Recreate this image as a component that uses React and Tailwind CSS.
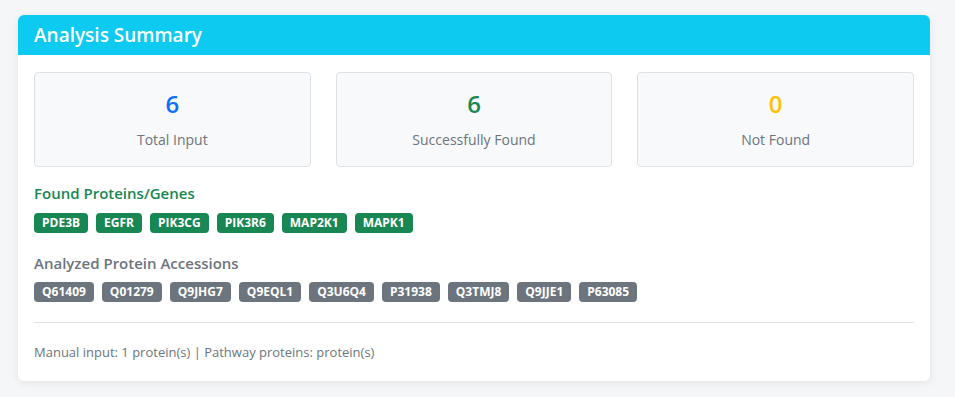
const found = ["PDE3B", "EGFR", "PIK3CG", "PIK3R6", "MAP2K1", "MAPK1"];
const accessions = ["Q61409", "Q01279", "Q9JHG7", "Q9EQL1", "Q3U6Q4", "P31938", "Q3TMJ8", "Q9JJE1", "P63085"];

function Stat({ value, label, color }) {
  return (
    <div className="flex flex-col items-center justify-center h-[95px] pt-[2px] bg-[#f8f9fa] border border-[#dee2e6] rounded-[4px]">
      <div className={`text-[24px] font-semibold leading-none ${color}`}>{value}</div>
      <div className="mt-[13px] text-[14px] text-[#6c757d]">{label}</div>
    </div>
  );
}

function Badge({ text, bg }) {
  return (
    <span className={`inline-flex items-center h-[20px] px-[8px] rounded-[4px] text-[12px] font-bold text-white ${bg}`}>
      {text}
    </span>
  );
}

export default function App() {
  return (
    <div className="min-h-screen bg-[#f5f6f8] pt-[15px] px-[18px] pb-[17px] font-['Open_Sans',sans-serif]">
      <div className="w-[912px] bg-white rounded-[6px] shadow-[0_2px_8px_rgba(0,0,0,0.08)] overflow-hidden">
        <div className="h-[40px] bg-[#0dcaf0] px-[16px] flex items-center">
          <h5 className="text-[19px] font-semibold text-white">Analysis Summary</h5>
        </div>
        <div className="px-[16px] pt-[17px] pb-[18px]">
          <div className="grid grid-cols-3 gap-[25px]">
            <Stat value="6" label="Total Input" color="text-[#0d6efd]" />
            <Stat value="6" label="Successfully Found" color="text-[#198754]" />
            <Stat value="0" label="Not Found" color="text-[#ffc107]" />
          </div>

          <h6 className="mt-[15px] text-[15px] font-semibold text-[#198754]">Found Proteins/Genes</h6>
          <div className="mt-[8px] flex flex-wrap gap-[8px]">
            {found.map((g) => (
              <Badge key={g} text={g} bg="bg-[#198754]" />
            ))}
          </div>

          <h6 className="mt-[19px] text-[15px] font-semibold text-[#6c757d]">Analyzed Protein Accessions</h6>
          <div className="mt-[8px] flex flex-wrap gap-[8px]">
            {accessions.map((a) => (
              <Badge key={a} text={a} bg="bg-[#6c757d]" />
            ))}
          </div>

          <hr className="mt-[20px] border-t border-[#dee2e6]" />

          <p className="mt-[20px] text-[13px] text-[#6c757d]">
            Manual input: 1 protein(s) | Pathway proteins: protein(s)
          </p>
        </div>
      </div>
    </div>
  );
}
